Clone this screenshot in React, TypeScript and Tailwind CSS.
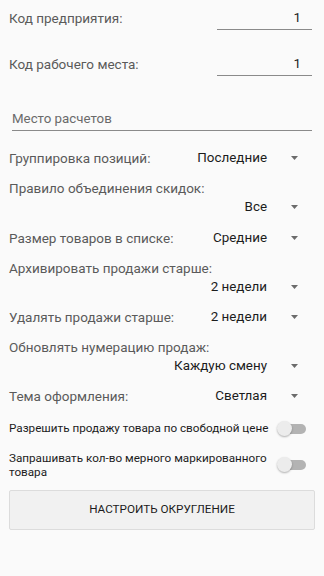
import React, { useState } from 'react'

const Arrow: React.FC = () => (
  <svg width="7" height="4" viewBox="0 0 7 4" className="ml-[24px] mr-[26px] shrink-0">
    <path d="M0 0 H7 L3.5 4 Z" fill="#6b6b6b" />
  </svg>
)

const SingleRow: React.FC<{ label: string; value: string }> = ({ label, value }) => (
  <div className="flex h-[30px] items-center pl-[9px]">
    <span className="flex-1 text-[13.5px] text-[#5a5a5a]">{label}</span>
    <span className="text-[13.4px] text-[#1c1c1c]">{value}</span>
    <Arrow />
  </div>
)

const DoubleRow: React.FC<{ label: string; value: string; extra?: boolean }> = ({ label, value, extra }) => (
  <div className={extra ? 'pt-[5px] pb-[7px] pl-[9px]' : 'pt-[5px] pb-[6px] pl-[9px]'}>
    <div className="text-[13.5px] leading-[20px] text-[#5a5a5a]">{label}</div>
    <div className="flex h-[18px] items-center justify-end">
      <span className="text-[13.4px] text-[#1c1c1c]">{value}</span>
      <Arrow />
    </div>
  </div>
)

const Toggle: React.FC<{ on: boolean; onClick: () => void }> = ({ on, onClick }) => (
  <button onClick={onClick} className="relative h-[16px] w-[30px] shrink-0">
    <span className={`absolute left-[4px] top-[3px] h-[10px] w-[25px] rounded-full ${on ? 'bg-[#80cbc4]' : 'bg-[#b3b3b3]'}`} />
    <span
      className={`absolute top-0 h-[15px] w-[15px] rounded-full shadow-[0_1px_2px_rgba(0,0,0,0.3)] ${on ? 'left-[15px] bg-[#009688]' : 'left-0 bg-[#ececec]'}`}
    />
  </button>
)

const App: React.FC = () => {
  const [freePrice, setFreePrice] = useState(false)
  const [askQty, setAskQty] = useState(false)

  return (
    <div className="h-[576px] w-[324px] overflow-hidden bg-[#fafafa] font-['Roboto',sans-serif]">
      {/* codes */}
      <div className="mt-[7px] flex h-[23px] items-center pl-[9px] pr-[12px]">
        <span className="flex-1 text-[13.5px] text-[#5a5a5a]">Код предприятия:</span>
        <div className="flex h-[23px] w-[95px] items-center justify-end border-b border-[#8a8a8a] pr-[11px] text-[13.4px] text-[#1c1c1c]">
          1
        </div>
      </div>
      <div className="mt-[23px] flex h-[23px] items-center pl-[9px] pr-[12px]">
        <span className="flex-1 text-[13.5px] text-[#5a5a5a]">Код рабочего места:</span>
        <div className="flex h-[23px] w-[95px] items-center justify-end border-b border-[#8a8a8a] pr-[11px] text-[13.4px] text-[#1c1c1c]">
          1
        </div>
      </div>

      <div className="mx-[12px] mt-[31px] flex h-[24px] items-center border-b border-[#8a8a8a] text-[13.3px] text-[#6a6a6a]">
        Место расчетов
      </div>

      {/* spinners */}
      <div className="mt-[12px]">
        <SingleRow label="Группировка позиций:" value="Последние" />
        <DoubleRow label="Правило объединения скидок:" value="Все" extra />
        <SingleRow label="Размер товаров в списке:" value="Средние" />
        <DoubleRow label="Архивировать продажи старше:" value="2 недели" />
        <SingleRow label="Удалять продажи старше:" value="2 недели" />
        <DoubleRow label="Обновлять нумерацию продаж:" value="Каждую смену" />
        <SingleRow label="Тема оформления:" value="Светлая" />
      </div>

      {/* switches */}
      <div className="mt-[3px] flex h-[30px] items-center pl-[9px] pr-[17px]">
        <span className="flex-1 text-[11.7px] text-[#1c1c1c]">Разрешить продажу товара по свободной цене</span>
        <Toggle on={freePrice} onClick={() => setFreePrice(!freePrice)} />
      </div>
      <div className="flex items-center pl-[9px] pr-[17px] pt-[7px]">
        <span className="flex-1 pr-[2px] text-[11.7px] leading-[14px] text-[#1c1c1c]">
          Запрашивать кол-во мерного маркированного товара
        </span>
        <Toggle on={askQty} onClick={() => setAskQty(!askQty)} />
      </div>

      <button className="mx-[9px] mt-[11px] flex h-[40px] w-[306px] items-center justify-center rounded-[2px] border border-[#dcdcdc] bg-[#f1f1f1] text-[11.7px] text-[#1c1c1c]">
        НАСТРОИТЬ ОКРУГЛЕНИЕ
      </button>
    </div>
  )
}

export default App
